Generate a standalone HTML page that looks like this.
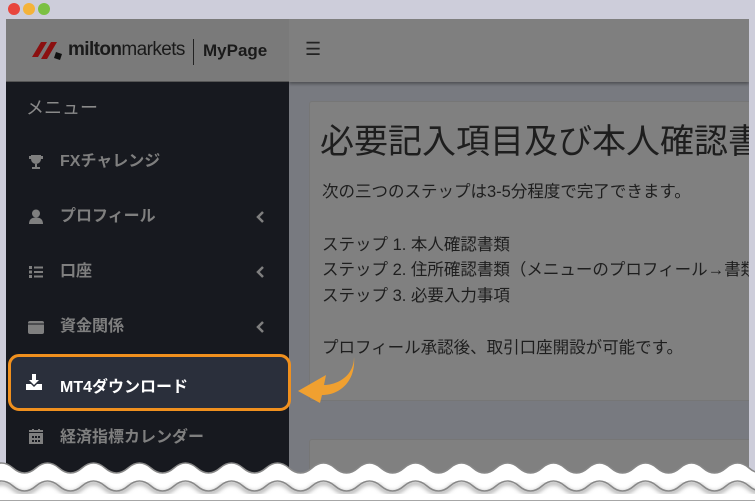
<!DOCTYPE html>
<html><head><meta charset="utf-8"><style>
*{margin:0;padding:0;box-sizing:border-box}
body{width:755px;height:501px;overflow:hidden;background:#cdcdda;position:relative;font-family:"Liberation Sans","Noto Sans CJK JP",sans-serif}
.dot{position:absolute;top:3px;width:12px;height:12px;border-radius:50%}
.win{position:absolute;left:6px;top:19px;width:743px;height:482px;background:#787a80;overflow:hidden}
.sb{position:absolute;left:0;top:0;width:283px;height:482px;background:#17191f}
.sbh{position:absolute;left:0;top:0;width:283px;height:63px;background:#7a7a7a;border-bottom:1px solid #555}
.top{position:absolute;left:283px;top:0;right:0;height:63px;background:#7f7f7f;box-shadow:0 2px 3px rgba(0,0,0,.35)}
.it{position:absolute;left:54px;color:#7f7f7f;font-weight:bold;font-size:16px;line-height:20px}
.ic{position:absolute;left:22px;width:16px;height:16px}
.chev{position:absolute;left:249px;width:10px;height:12px}
.card{position:absolute;left:303px;top:82px;width:460px;height:300px;background:#808080;border:1px solid #767676;border-radius:3px}
.t{position:absolute;left:316px;color:#1e1e1e;font-size:16.5px;white-space:nowrap;line-height:20px}
</style></head><body>
<div class="dot" style="left:8px;background:#e8453c"></div>
<div class="dot" style="left:23px;background:#f4b33a"></div>
<div class="dot" style="left:38px;background:#7bc043"></div>
<div class="win">
 <div class="top"><span style="position:absolute;left:16px;top:20px;font-size:18px;color:#222">☰</span></div>
 <div class="sb">
  <div class="sbh">
   <svg style="position:absolute;left:26px;top:21px" width="34" height="22" viewBox="0 0 34 22"><path d="M0 17 L9 2 L15 2 L6 17Z M9 19 L19 2 L25 2 L15 19Z" fill="#8b1010"/><path d="M24 12 L30 14 L28 20 L22 18Z" fill="#111"/></svg>
   <span style="position:absolute;left:62px;top:20px;font-size:19px;color:#1a1a1a;letter-spacing:-0.6px"><b>milton</b>markets</span>
   <div style="position:absolute;left:187px;top:20px;width:1px;height:26px;background:#222"></div>
   <span style="position:absolute;left:197px;top:22px;font-size:17px;font-weight:bold;color:#1a1a1a">MyPage</span>
  </div>
  <div class="it" style="left:20px;top:79px;font-size:18px;font-weight:normal;color:#8a8a8a">メニュー</div>
  <svg class="ic" style="top:135px" viewBox="0 0 16 16"><path d="M3 1h10v4a5 5 0 0 1-10 0z M1 2h2v3H1z M13 2h2v3h-2z M7 10h2v3H7z M4 13h8v2H4z" fill="#7f7f7f"/></svg>
  <div class="it" style="top:133px">FXチャレンジ</div>
  <svg class="ic" style="top:190px" viewBox="0 0 16 16"><circle cx="8" cy="4.5" r="4" fill="#7f7f7f"/><path d="M1 15q0-6.5 7-6.5t7 6.5z" fill="#7f7f7f"/></svg>
  <div class="it" style="top:188px">プロフィール</div><svg class="chev" style="top:192px" viewBox="0 0 10 12"><path d="M8 1L3 6l5 5" stroke="#7f7f7f" stroke-width="2.5" fill="none"/></svg>
  <svg class="ic" style="top:245px" viewBox="0 0 16 16"><path d="M1 2h3v3H1zM6 2.5h9v2H6zM1 6.5h3v3H1zM6 7h9v2H6zM1 11h3v3H1zM6 11.5h9v2H6z" fill="#7f7f7f"/></svg>
  <div class="it" style="top:243px">口座</div><svg class="chev" style="top:247px" viewBox="0 0 10 12"><path d="M8 1L3 6l5 5" stroke="#7f7f7f" stroke-width="2.5" fill="none"/></svg>
  <svg class="ic" style="top:300px" viewBox="0 0 16 16"><rect x="0" y="2" width="16" height="13" rx="2" fill="#7f7f7f"/><rect x="0" y="4.5" width="16" height="1" fill="#17191f"/></svg>
  <div class="it" style="top:298px">資金関係</div><svg class="chev" style="top:302px" viewBox="0 0 10 12"><path d="M8 1L3 6l5 5" stroke="#7f7f7f" stroke-width="2.5" fill="none"/></svg>
  <svg class="ic" style="top:410px" viewBox="0 0 16 16"><path d="M1 4h14v11H1z" fill="#7f7f7f"/><path d="M1 1h14v2H1z M4 0h2v3H4zM10 0h2v3h-2z" fill="#7f7f7f"/><path d="M4 7h2v2H4zM7 7h2v2H7zM10 7h2v2h-2zM4 11h2v2H4zM7 11h2v2H7zM10 11h2v2h-2z" fill="#17191f"/></svg>
  <div class="it" style="top:409px">経済指標カレンダー</div>
 </div>
 <div class="card">
  <div style="position:absolute;left:10px;top:12px;font-size:34px;color:#1e1e1e;white-space:nowrap">必要記入項目及び本人確認書類</div>
 </div>
 <div class="card" style="top:420px;height:80px"></div>
 <div class="t" style="top:163px">次の三つのステップは3-5分程度で完了できます。</div>
 <div class="t" style="top:216px">ステップ 1. 本人確認書類</div>
 <div class="t" style="top:241px">ステップ 2. 住所確認書類（メニューのプロフィール→書類</div>
 <div class="t" style="top:267px">ステップ 3. 必要入力事項</div>
 <div class="t" style="top:319px">プロフィール承認後、取引口座開設が可能です。</div>
</div>
<div style="position:absolute;left:8px;top:354px;width:283px;height:57px;background:#2a2f3b;border:3px solid #f0901e;border-radius:11px"></div>
<svg style="position:absolute;left:26px;top:374px" width="16" height="16" viewBox="0 0 16 16"><path d="M6 0h4v6h3l-5 5-5-5h3z M0 10h5l3 3 3-3h5v6H0z" fill="#fff"/></svg>
<div style="position:absolute;left:60px;top:373px;color:#fff;font-weight:bold;font-size:16px">MT4ダウンロード</div>
<svg style="position:absolute;left:296px;top:355px" width="64" height="48" viewBox="0 0 64 48"><path d="M58 2 C58 22 40 30 28 30 L30 20 L2 36 L24 48 L26 40 C44 40 60 26 58 2Z" fill="#f0a030"/></svg>
<svg style="position:absolute;left:0;top:455px" width="755" height="46" viewBox="0 0 755 46">
<defs><filter id="s"><feGaussianBlur stdDeviation="2"/></filter></defs>
<path d="M-10 13 q11.5 -10 23 0 q11.5 10 23 0 q11.5 -10 23 0 q11.5 10 23 0 q11.5 -10 23 0 q11.5 10 23 0 q11.5 -10 23 0 q11.5 10 23 0 q11.5 -10 23 0 q11.5 10 23 0 q11.5 -10 23 0 q11.5 10 23 0 q11.5 -10 23 0 q11.5 10 23 0 q11.5 -10 23 0 q11.5 10 23 0 q11.5 -10 23 0 q11.5 10 23 0 q11.5 -10 23 0 q11.5 10 23 0 q11.5 -10 23 0 q11.5 10 23 0 q11.5 -10 23 0 q11.5 10 23 0 q11.5 -10 23 0 q11.5 10 23 0 q11.5 -10 23 0 q11.5 10 23 0 q11.5 -10 23 0 q11.5 10 23 0 q11.5 -10 23 0 q11.5 10 23 0 q11.5 -10 23 0 q11.5 10 23 0 V46 H-10Z" fill="#fff" stroke="#888" stroke-width="1.5"/>
<g id="w2"><path d="M-10 31 q11.5 -10 23 0 q11.5 10 23 0 q11.5 -10 23 0 q11.5 10 23 0 q11.5 -10 23 0 q11.5 10 23 0 q11.5 -10 23 0 q11.5 10 23 0 q11.5 -10 23 0 q11.5 10 23 0 q11.5 -10 23 0 q11.5 10 23 0 q11.5 -10 23 0 q11.5 10 23 0 q11.5 -10 23 0 q11.5 10 23 0 q11.5 -10 23 0 q11.5 10 23 0 q11.5 -10 23 0 q11.5 10 23 0 q11.5 -10 23 0 q11.5 10 23 0 q11.5 -10 23 0 q11.5 10 23 0 q11.5 -10 23 0 q11.5 10 23 0 q11.5 -10 23 0 q11.5 10 23 0 q11.5 -10 23 0 q11.5 10 23 0 q11.5 -10 23 0 q11.5 10 23 0 q11.5 -10 23 0 q11.5 10 23 0" fill="none" stroke="#999" stroke-width="3" filter="url(#s)" transform="translate(0,2)"/>
<path d="M-10 31 q11.5 -10 23 0 q11.5 10 23 0 q11.5 -10 23 0 q11.5 10 23 0 q11.5 -10 23 0 q11.5 10 23 0 q11.5 -10 23 0 q11.5 10 23 0 q11.5 -10 23 0 q11.5 10 23 0 q11.5 -10 23 0 q11.5 10 23 0 q11.5 -10 23 0 q11.5 10 23 0 q11.5 -10 23 0 q11.5 10 23 0 q11.5 -10 23 0 q11.5 10 23 0 q11.5 -10 23 0 q11.5 10 23 0 q11.5 -10 23 0 q11.5 10 23 0 q11.5 -10 23 0 q11.5 10 23 0 q11.5 -10 23 0 q11.5 10 23 0 q11.5 -10 23 0 q11.5 10 23 0 q11.5 -10 23 0 q11.5 10 23 0 q11.5 -10 23 0 q11.5 10 23 0 q11.5 -10 23 0 q11.5 10 23 0" fill="none" stroke="#888" stroke-width="1.5"/></g>
</svg>
</body></html>
